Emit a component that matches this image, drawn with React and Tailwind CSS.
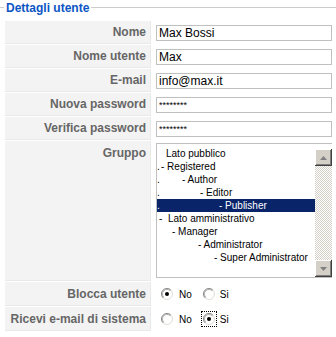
import React from "react";

const fields = [
  { label: "Nome", value: "Max Bossi" },
  { label: "Nome utente", value: "Max" },
  { label: "E-mail", value: "info@max.it" },
  { label: "Nuova password", value: "********" },
  { label: "Verifica password", value: "********" },
];

const groups = [
  { text: "Lato pubblico", pad: "pl-[9px]" },
  { text: "- Registered", pad: "pl-[4px]", dot: true },
  { text: "- Author", pad: "pl-[25px]", dot: true },
  { text: "- Editor", pad: "pl-[43px]", dot: true },
  { text: "- Publisher", pad: "pl-[62px]", dot: true, selected: true },
  { text: "-\u00a0\u00a0Lato amministrativo", pad: "pl-[2px]" },
  { text: "- Manager", pad: "pl-[15px]" },
  { text: "- Administrator", pad: "pl-[41px]" },
  { text: "- Super Administrator", pad: "pl-[57px]" },
];

const Radio = ({ checked }) => (
  <svg width="12" height="12" viewBox="0 0 12 12" className="shrink-0">
    <circle cx="6" cy="6" r="5.5" fill="#fff" stroke="#e0ddd6" />
    <path d="M2.1 9.9 A5.5 5.5 0 0 1 9.9 2.1" fill="none" stroke="#8a8a8a" />
    <path d="M2.8 9.2 A4.5 4.5 0 0 1 9.2 2.8" fill="none" stroke="#b0b0b0" />
    {checked && <circle cx="6" cy="6" r="2" fill="#000" />}
  </svg>
);

const Arrow = ({ up }) => (
  <svg width="7" height="4" viewBox="0 0 7 4">
    <path d={up ? "M3.5 0 L7 4 L0 4 Z" : "M0 0 L7 0 L3.5 4 Z"} fill="#808080" />
  </svg>
);

const ScrollButton = ({ up }) => (
  <div className="h-[17px] w-[17px] flex items-center justify-center bg-[#d4d0c8] shadow-[inset_-1px_-1px_#404040,inset_1px_1px_#ffffff,inset_-2px_-2px_#808080]">
    <Arrow up={up} />
  </div>
);

const Key = ({ children, className }) => (
  <div
    className={
      "ml-[5px] w-[146px] shrink-0 bg-[#f3f3f3] border-b border-r border-[#e9e9e9] pr-[4px] text-right text-[12px] font-bold text-[#666] " +
      className
    }
  >
    {children}
  </div>
);

export default function App() {
  return (
    <div className="w-[336px] h-[337px] overflow-hidden bg-white font-['Liberation_Sans',Arial,sans-serif]">
      {/* legend */}
      <div className="flex items-center h-[15px]">
        <div className="w-[4px] h-px bg-[#cccccc]" />
        <span className="px-[2px] text-[12px] font-bold leading-none text-[#0B55C4]">
          Dettagli utente
        </span>
        <div className="flex-1 h-px bg-[#cccccc]" />
      </div>

      <div className="mt-[6px] flex flex-col gap-px">
        {fields.map((f) => (
          <div key={f.label} className="flex h-[23px]">
            <Key className="flex items-center justify-end">{f.label}</Key>
            <div className="pl-[5px] flex items-center">
              <input
                readOnly
                value={f.value}
                className={
                  "w-[176px] h-[16px] border border-[#c0c0c0] px-[2px] leading-[14px] text-black outline-none " +
                  (f.value.startsWith("*") ? "text-[9px]" : "text-[12px]")
                }
              />
            </div>
          </div>
        ))}

        {/* Gruppo */}
        <div className="flex h-[140px]">
          <Key className="pt-[5px] leading-[14px]">Gruppo</Key>
          <div className="pl-[5px] pt-[2px]">
            <div className="flex w-[176px] h-[135px] border-l border-t border-b border-[#c0c0c0] bg-white">
              <div className="flex-1 pt-[3px] text-[10px] text-black">
                {groups.map((g) => (
                  <div
                    key={g.text}
                    className={
                      "relative h-[13px] leading-[13px] whitespace-pre " +
                      (g.selected ? "bg-[#0a246a] text-white" : "")
                    }
                  >
                    {g.dot && <span className="absolute left-0 top-0">.</span>}
                    <div className={g.pad}>{g.text}</div>
                  </div>
                ))}
              </div>
              <div className="w-[17px] pt-[5px] flex flex-col">
                <ScrollButton up />
                <div className="flex-1 bg-[repeating-conic-gradient(#d4d0c8_0%_25%,#ffffff_0%_50%)] bg-[length:2px_2px]" />
                <ScrollButton />
              </div>
            </div>
          </div>
        </div>

        {/* Blocca utente */}
        <div className="flex h-[24px]">
          <Key className="flex items-center justify-end">Blocca utente</Key>
          <div className="pl-[10px] flex items-center text-[10px] text-black">
            <Radio checked />
            <span className="ml-[6px]">No</span>
            <span className="ml-[11px] flex">
              <Radio />
            </span>
            <span className="ml-[5px]">Si</span>
          </div>
        </div>

        {/* Ricevi e-mail */}
        <div className="flex h-[24px]">
          <Key className="flex items-center justify-end">Ricevi e-mail di sistema</Key>
          <div className="pl-[10px] flex items-center text-[10px] text-black">
            <Radio />
            <span className="ml-[6px]">No</span>
            <span className="ml-[9px] flex border border-dotted border-black p-px">
              <Radio checked />
            </span>
            <span className="ml-[3px]">Si</span>
          </div>
        </div>
      </div>
    </div>
  );
}
